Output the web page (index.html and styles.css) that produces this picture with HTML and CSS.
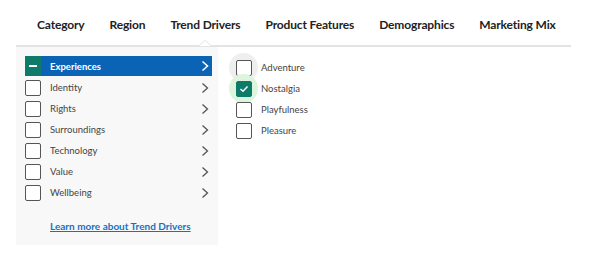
FILE: index.html
```html
<!DOCTYPE html>
<html>
<head>
<meta charset="utf-8">
<link rel="stylesheet" href="styles.css">
</head>
<body>
<div class="wrap">
  <nav class="tabs">
    <span class="tab">Category</span>
    <span class="tab">Region</span>
    <span class="tab active">Trend Drivers</span>
    <span class="tab">Product Features</span>
    <span class="tab">Demographics</span>
    <span class="tab">Marketing Mix</span>
    <svg class="notch" width="14" height="7" viewBox="0 0 14 7"><polygon points="0,6.5 7,0.5 14,6.5" fill="#fff" stroke="#e3e3e3" stroke-width="1"/></svg>
  </nav>
  <div class="body">
    <div class="panel">
      <ul class="list">
        <li class="row selected"><span class="box minus"></span><span class="label">Experiences</span><svg class="chev" width="8" height="12" viewBox="0 0 8 12"><path d="M1.5 1.5 L6.5 6 L1.5 10.5" fill="none" stroke="#fff" stroke-width="1.6"/></svg></li>
        <li class="row"><span class="box"></span><span class="label">Identity</span><svg class="chev" width="8" height="12" viewBox="0 0 8 12"><path d="M1.5 1.5 L6.5 6 L1.5 10.5" fill="none" stroke="#555" stroke-width="1.3"/></svg></li>
        <li class="row"><span class="box"></span><span class="label">Rights</span><svg class="chev" width="8" height="12" viewBox="0 0 8 12"><path d="M1.5 1.5 L6.5 6 L1.5 10.5" fill="none" stroke="#555" stroke-width="1.3"/></svg></li>
        <li class="row"><span class="box"></span><span class="label">Surroundings</span><svg class="chev" width="8" height="12" viewBox="0 0 8 12"><path d="M1.5 1.5 L6.5 6 L1.5 10.5" fill="none" stroke="#555" stroke-width="1.3"/></svg></li>
        <li class="row"><span class="box"></span><span class="label">Technology</span><svg class="chev" width="8" height="12" viewBox="0 0 8 12"><path d="M1.5 1.5 L6.5 6 L1.5 10.5" fill="none" stroke="#555" stroke-width="1.3"/></svg></li>
        <li class="row"><span class="box"></span><span class="label">Value</span><svg class="chev" width="8" height="12" viewBox="0 0 8 12"><path d="M1.5 1.5 L6.5 6 L1.5 10.5" fill="none" stroke="#555" stroke-width="1.3"/></svg></li>
        <li class="row"><span class="box"></span><span class="label">Wellbeing</span><svg class="chev" width="8" height="12" viewBox="0 0 8 12"><path d="M1.5 1.5 L6.5 6 L1.5 10.5" fill="none" stroke="#555" stroke-width="1.3"/></svg></li>
      </ul>
      <a class="learn" href="#">Learn more about Trend Drivers</a>
    </div>
    <ul class="sub">
      <li class="row"><span class="halo gray"></span><span class="box"></span><span class="label">Adventure</span></li>
      <li class="row"><span class="halo green"></span><span class="box checked"><svg width="10" height="8" viewBox="0 0 10 8"><path d="M1.5 4 L4 6.3 L8.5 1.5" fill="none" stroke="#fff" stroke-width="1.5"/></svg></span><span class="label">Nostalgia</span></li>
      <li class="row"><span class="box"></span><span class="label">Playfulness</span></li>
      <li class="row"><span class="box"></span><span class="label">Pleasure</span></li>
    </ul>
  </div>
</div>
</body>
</html>
```

FILE: styles.css
```css
* { box-sizing: border-box; }
html, body { margin: 0; padding: 0; background: #fff; }
body { font-family: Lato, "Noto Sans", sans-serif; color: #222; }
.wrap { width: 555px; margin-left: 16px; }
.tabs {
  position: relative;
  display: flex;
  gap: 25px;
  height: 47px;
  padding: 17px 0 0 21px;
  border-bottom: 2px solid #e3e3e3;
}
.tab { font-size: 12px; font-weight: 700; color: #222; line-height: 16px; white-space: nowrap; letter-spacing: -0.15px; }
.notch { position: absolute; left: 182px; bottom: -2px; display: block; }
.body { display: flex; }
.panel {
  width: 202px;
  height: 198px;
  background: #f8f8f8;
  padding: 9px 6px 0 9px;
}
.list, .sub { list-style: none; margin: 0; padding: 0; }
.row {
  position: relative;
  display: flex;
  align-items: center;
  height: 21px;
  font-size: 9.5px;
  color: #444;
}
.list .row { padding-right: 3px; }
.list .row .label { flex: 1; }
.row.selected { background: #0b63b6; color: #fff; font-weight: 700; height: 20px; margin-bottom: 1px; }
.box {
  width: 16px;
  height: 16px;
  border: 1.5px solid #555;
  border-radius: 2px;
  background: #fff;
  margin-right: 9px;
  flex: none;
  position: relative;
  display: flex;
  align-items: center;
  justify-content: center;
}
.box.minus { background: #0e7a6a; border: none; width: 16px; height: 20px; border-radius: 0; }
.box.minus::after { content: ""; width: 8px; height: 2px; background: #fff; }
.chev { display: block; }
.learn {
  display: block;
  margin: 17px 0 0 25px;
  font-size: 10px;
  font-weight: 700;
  color: #1a6fbf;
  text-decoration: underline;
}
.sub { padding: 10px 0 0 18px; }
.box.checked { background: #0e7a6a; border-color: #0e7a6a; }
.box.checked svg { display: block; }
.halo {
  position: absolute;
  left: -7px;
  top: -4px;
  width: 29px;
  height: 29px;
  border-radius: 50%;
}
.halo.gray { background: #efefef; }
.halo.green { background: #dcf5dc; }
.sub .row .label { color: #444; }
```
